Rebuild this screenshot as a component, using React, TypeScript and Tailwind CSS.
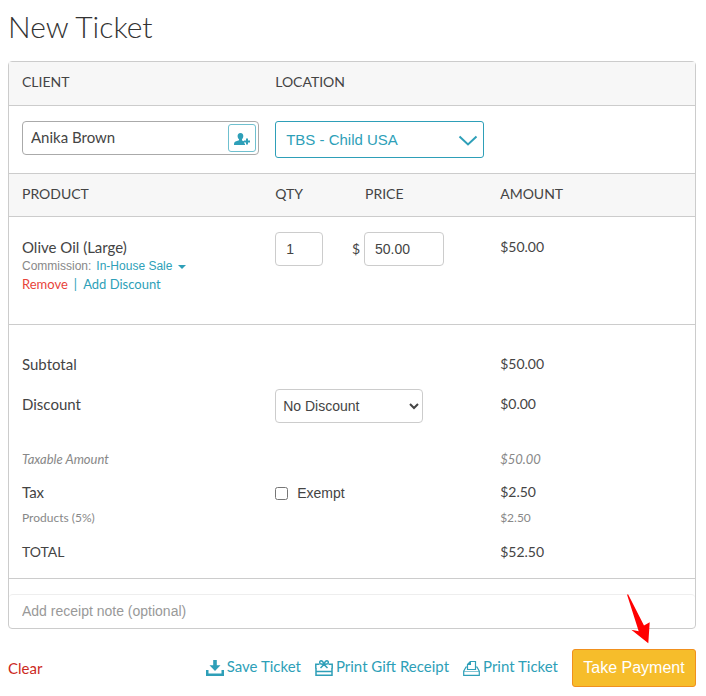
import React, { useState } from 'react';

interface AmountRowProps {
    label: string;
    amount: string;
    className?: string;
    amountClassName?: string;
    children?: React.ReactNode;
}

const AmountRow: React.FC<AmountRowProps> = ({ label, amount, className = '', amountClassName = 'text-[14px]', children }) => {
    return (
        <tr className={`align-top ${className}`}>
            <th scope="row" className="pl-[13px] pt-[5px] text-left font-normal">{label}</th>
            <td colSpan={2}>{children}</td>
            <td className={`pt-[5px] ${amountClassName}`}>{amount}</td>
        </tr>
    );
};

const AddClientIcon = () => (
    <svg width="16" height="12" viewBox="0 0 16 12" fill="currentColor" aria-hidden="true">
        <path d="M6.500 0C8.500 0 9.400 1.300 9.300 3.200 9.200 4.600 8.600 5.600 8 6.300v1.200l2 .8v2.200h1V12H0c0-2.200.3-3.100 1.500-3.600L5 7.200v-1C4.200 5.500 3.700 4.600 3.600 3.200 3.500 1.300 4.500 0 6.500 0z" />
        <path d="M12 5.500h2v2h2v2h-2v2h-2v-2h-2v-2h2z" />
    </svg>
);

const SaveIcon = () => (
    <svg width="18" height="16" viewBox="0 0 18 16" fill="currentColor" aria-hidden="true">
        <path d="M7.200 0h3.600v5.300H14.500L9 11 3.500 5.300h3.700z" />
        <path d="M0 10h2.500v3.500h13V10H18v6H0z" />
    </svg>
);

const GiftIcon = () => (
    <svg width="18" height="16" viewBox="0 0 18 16" fill="none" stroke="currentColor" strokeWidth="1.500" aria-hidden="true">
        <path d="M4.500 4.300H.8v4.200M13.500 4.300h3.700v4.200" />
        <path d="M1 8v7.200h16V8M1 11.500h16" />
        <path d="M9 4.500C8.300 2 7.200.8 6 .8 4.600.8 4.200 2.800 5.300 3.600 6.200 4.200 7.800 4.200 9 4.500zM9 4.500c.7-2.500 1.800-3.700 3-3.700 1.400 0 1.800 2 .7 2.800-.9.600-2.500.6-3.700.9zM9 4.500L5.500 8M9 4.500L12.500 8" />
    </svg>
);

const PrinterIcon = () => (
    <svg width="17" height="15" viewBox="0 0 17 15" fill="none" stroke="currentColor" aria-hidden="true">
        <path d="M4 6H3L.7 10.200v4.100h15.600v-4.100L14 6h-1" strokeWidth="1.200" />
        <path d="M1 10.500h15" strokeOpacity=".6" />
        <path d="M4.500 8.500v-5l3-3h5v8z" strokeWidth="1.200" />
        <path d="M4.500 4V3l2.500-2.500h1V4z" fill="currentColor" stroke="none" />
    </svg>
);

const App: React.FC = () => {
    const [client, setClient] = useState('Anika Brown');
    const [qty, setQty] = useState('1');
    const [price, setPrice] = useState('50.00');
    const [exempt, setExempt] = useState(false);
    const [note, setNote] = useState('');

    return (
        <main className="pt-[6px] pr-[10px] pl-2 font-['Lato',sans-serif] text-[15px] leading-5 text-[#444]">
            <h1 className="mb-[15px] text-[30px] leading-10 font-light text-[#333]">New Ticket</h1>

            <div className="rounded-[4px] border border-[#ccc]">
                <div className="grid grid-cols-[38.8%_1fr]">
                    <label htmlFor="client" className="border-b border-[#ccc] bg-[#f7f7f7] pt-[10px] pb-[13px] pl-[13px] text-[14px]">CLIENT</label>
                    <label htmlFor="location" className="border-b border-[#ccc] bg-[#f7f7f7] pt-[10px] pb-[13px] text-[14px]">LOCATION</label>
                    <div className="py-[15px] pr-4 pl-[13px]">
                        <div className="flex h-[34px] items-center rounded-[4px] border border-[#aaa] pr-[2px] pl-2">
                            <input
                                id="client"
                                value={client}
                                onChange={(e) => setClient(e.target.value)}
                                className="min-w-0 flex-1 pb-[2px] outline-none"
                            />
                            <button
                                aria-label="Add client"
                                className="flex size-7 items-center justify-center rounded-[3px] border border-[#6fc0cf] pt-[2px] text-[#2e9fb8]"
                            >
                                <AddClientIcon />
                            </button>
                        </div>
                    </div>
                    <div className="py-[15px]">
                        <div className="relative w-[209px]">
                            <select
                                id="location"
                                className="h-[37px] w-full appearance-none rounded-[3px] border border-[#2e9fb8] px-[10px] font-['Liberation_Sans',sans-serif] text-[15px] text-[#2e9fb8]"
                            >
                                <option>TBS - Child USA</option>
                            </select>
                            <svg className="pointer-events-none absolute top-[14px] right-[6px] text-[#2e9fb8]" width="20" height="12" viewBox="0 0 20 12" fill="none" stroke="currentColor" strokeWidth="2" aria-hidden="true">
                                <path d="M1.500 1.500L10 9.500l8.500-8" />
                            </svg>
                        </div>
                    </div>
                </div>

                <table className="w-full table-fixed border-separate border-spacing-0">
                    <colgroup>
                        <col className="w-[38.8%]" />
                        <col className="w-[13.1%]" />
                        <col className="w-[19.7%]" />
                        <col />
                    </colgroup>
                    <thead>
                        <tr className="text-left text-[14px] *:border-y *:border-[#ccc] *:bg-[#f7f7f7] *:pt-[10px] *:pb-3 *:font-normal">
                            <th className="pl-[13px]">PRODUCT</th>
                            <th>QTY</th>
                            <th>PRICE</th>
                            <th>AMOUNT</th>
                        </tr>
                    </thead>
                    <tbody>
                        <tr className="h-[108px] align-top *:border-b *:border-[#ccc]">
                            <td className="pt-5 pl-[13px]">
                                <div>Olive Oil (Large)</div>
                                <div className="flex items-center font-['Liberation_Sans',sans-serif] text-[12px] leading-[18px] text-[#888]">
                                    Commission:
                                    <button className="ml-[5px] flex items-center gap-[6px] text-[#2e9fb8]">
                                        In-House Sale
                                        <svg className="mt-[2px]" width="8" height="4" viewBox="0 0 8 4" fill="currentColor" aria-hidden="true">
                                            <path d="M0 0h8L4 4z" />
                                        </svg>
                                    </button>
                                </div>
                                <div className="flex items-center text-[13px] leading-[18px] text-[#2e9fb8]">
                                    <button className="text-[#e8443a]">Remove</button>
                                    <span className="px-[6px]">|</span>
                                    <button>Add Discount</button>
                                </div>
                            </td>
                            <td className="pt-[15px]">
                                <input
                                    aria-label="Quantity"
                                    value={qty}
                                    onChange={(e) => setQty(e.target.value)}
                                    className="h-[34px] w-12 rounded-[4px] border border-[#ccc] px-[10px] font-['Liberation_Sans',sans-serif] text-[14px]"
                                />
                            </td>
                            <td className="pt-[15px]">
                                <div className="-ml-[13px] flex items-center gap-1">
                                    <span className="w-2 text-[14px]">$</span>
                                    <input
                                        aria-label="Price"
                                        value={price}
                                        onChange={(e) => setPrice(e.target.value)}
                                        className="h-[34px] w-20 rounded-[4px] border border-[#ccc] px-[10px] font-['Liberation_Sans',sans-serif] text-[14px]"
                                    />
                                </div>
                            </td>
                            <td className="pt-5 text-[14px]">$50.00</td>
                        </tr>
                    </tbody>
                    <tbody>
                        <tr className="h-6" aria-hidden="true"><td colSpan={4} /></tr>
                        <AmountRow label="Subtotal" amount="$50.00" className="h-10" />
                        <AmountRow label="Discount" amount="$0.00" className="h-[55px]">
                            <select
                                aria-label="Discount"
                                className="h-[34px] w-[148px] rounded-[4px] border border-[#ccc] px-[3px] font-['Liberation_Sans',sans-serif] text-[14px]"
                            >
                                <option>No Discount</option>
                            </select>
                        </AmountRow>
                        <AmountRow label="Taxable Amount" amount="$50.00" className="h-[33px] text-[13px] text-[#888] italic" amountClassName="text-[13px]" />
                        <AmountRow label="Tax" amount="$2.50" className="h-[26px]">
                            <label className="flex items-center gap-[9px] pt-[6px] font-['Liberation_Sans',sans-serif] text-[14px]">
                                <input
                                    type="checkbox"
                                    checked={exempt}
                                    onChange={(e) => setExempt(e.target.checked)}
                                    className="size-[13px]"
                                />
                                Exempt
                            </label>
                        </AmountRow>
                        <AmountRow label="Products (5%)" amount="$2.50" className="h-[34px] text-[12px] text-[#888]" amountClassName="text-[12px]" />
                        <AmountRow label="TOTAL" amount="$52.50" className="h-[41px] text-[14px]" />
                    </tbody>
                </table>

                <div className="border-t border-[#ccc] pt-[15px]">
                    <input
                        aria-label="Receipt note"
                        placeholder="Add receipt note (optional)"
                        value={note}
                        onChange={(e) => setNote(e.target.value)}
                        className="block h-[34px] w-full rounded-[4px] border-t border-[#eee] px-[13px] pb-[2px] font-['Liberation_Sans',sans-serif] text-[14px] placeholder:text-[#999]"
                    />
                </div>
            </div>

            <div className="mt-5 flex items-center text-[15px] text-[#2e9fb8]">
                <button className="mr-auto text-[#cc2a1e]">Clear</button>
                <div className="flex items-start gap-[14px]">
                    <button className="flex items-end gap-[3px] pt-[7px]"><SaveIcon />Save Ticket</button>
                    <button className="flex items-end gap-[3px] pt-[7px]"><GiftIcon />Print Gift Receipt</button>
                    <button className="flex items-end gap-[3px] pt-[7px]"><PrinterIcon />Print Ticket</button>
                    <div className="relative">
                        <button className="h-[38px] min-w-31 rounded-[3px] border border-[#f0901e] bg-[#f6bd2b] px-[10px] font-['Liberation_Sans',sans-serif] text-[16px] text-white">
                            Take Payment
                        </button>
                        <svg className="pointer-events-none absolute right-[45px] bottom-full mb-[5px] text-[#f00]" width="25" height="50" viewBox="0 0 25 50" fill="currentColor" aria-hidden="true">
                            <path d="M1 .5L12.700 37.300 5.300 35.700 22.300 49.300 23.700 28.300 18 31.500 2.200.5z" />
                        </svg>
                    </div>
                </div>
            </div>
        </main>
    );
};

export default App;
